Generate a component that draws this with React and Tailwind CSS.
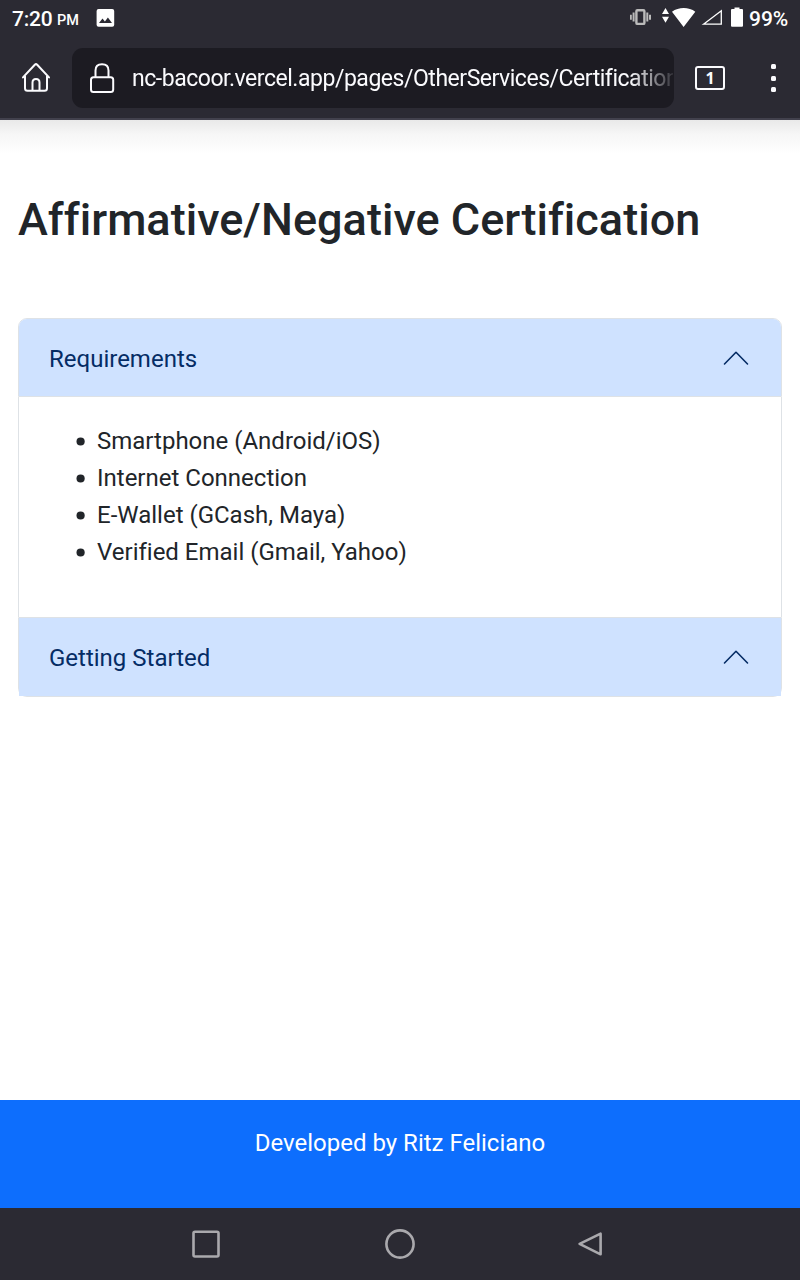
import React from "react";

function StatusBar() {
  return (
    <div className="flex h-9 items-center pl-3 text-white">
      <span className="w-[45px] whitespace-nowrap pt-[2px] text-[21px] font-medium leading-9 tracking-[-0.2px]">7:20</span>
      <span className="w-[38px] whitespace-nowrap pt-[5px] text-[14.5px] font-medium tracking-[-0.1px]">PM</span>
      <svg className="h-[18px] w-[20px]" viewBox="0 0 20 18">
        <rect x="1.6" width="17.6" height="17.8" rx="2" fill="#fff" />
        <path d="M4 14l3.5-4.6 2.4 3 3-4L17 14z" fill="#2b2a33" />
      </svg>
      <svg className="ml-auto h-9 w-[118px] shrink-0" viewBox="630 0 118 36" fill="#fff">
        <g fill="none" stroke="#bbb" strokeWidth="2">
          <rect x="636.4" y="10.3" width="8" height="13.6" rx="1" strokeWidth="2.4" />
          <path d="M633.6 12.5v9M647.3 12.5v9M630.8 14.7v5M650 14.7v5" />
        </g>
        <path d="M665.5 8l3.5 6h-7zM662 16.8h7l-3.5 6zM672 11.8c6.5-5 17-5 23.3 0L683.6 27z" />
        <path d="M703.5 24.2L721.3 10.8v13.4z" fill="none" stroke="#fff" strokeWidth="1.3" />
        <path d="M731 10q0-1 1-1h2.5V7.5h5V9h2.5q1 0 1 1v15.7q0 1-1 1h-10q-1 0-1-1z" />
      </svg>
      <span className="ml-[1px] w-[51px] whitespace-nowrap pt-[2px] text-[21px] font-medium leading-9">99%</span>
    </div>
  );
}

function BrowserBar() {
  return (
    <div className="flex h-[84px] items-start border-b-2 border-[#42414d] pt-3">
      <svg className="h-[60px] w-[72px] shrink-0" viewBox="0 48 72 60" fill="none" stroke="#fbfbfe" strokeWidth="2" strokeLinecap="round" strokeLinejoin="round">
        <path d="M23 77.4L34.8 64.7q1.2-1.1 2.4 0L49 77.4M25 76v12.3q0 2.5 2.5 2.5h17q2.5 0 2.5-2.5V76M32.5 90.5v-8q0-3.5 3.5-3.5t3.5 3.5v8" />
      </svg>
      <div className="flex h-[60px] w-[602px] shrink-0 items-center overflow-hidden rounded-[11px] bg-[#1c1b22]">
        <svg className="h-[60px] w-[60px] shrink-0" viewBox="72 48 60 60" fill="none" stroke="#fbfbfe" strokeWidth="2">
          <rect x="91" y="77.3" width="22.2" height="14.7" rx="2.5" />
          <path d="M95.5 77V70.5q0-6.2 6.5-6.2t6.5 6.2V77" />
        </svg>
        <div className="w-[541px] overflow-hidden whitespace-nowrap pt-[2px] text-[23px] tracking-[-0.47px] text-[#fbfbfe] [mask-image:linear-gradient(to_right,#000_92%,transparent_101%)]">
          nc-bacoor.vercel.app/pages/OtherServices/Certification
        </div>
      </div>
      <div className="ml-[21px] mt-[18px] flex h-6 w-[30px] items-center justify-center rounded-[3px] border-2 border-[#fbfbfe] pb-px font-['Noto_Sans',sans-serif] text-[16px] font-bold leading-none text-[#fbfbfe]">
        1
      </div>
      <div className="ml-[46px] mt-4 flex h-7 flex-col justify-between">
        <span className="h-[5px] w-[5px] rounded-[1.5px] bg-[#fbfbfe]" />
        <span className="h-[5px] w-[5px] rounded-[1.5px] bg-[#fbfbfe]" />
        <span className="h-[5px] w-[5px] rounded-[1.5px] bg-[#fbfbfe]" />
      </div>
    </div>
  );
}

function AccordionHeader({ title }) {
  return (
    <button className="flex w-full grow items-center justify-between bg-[#cfe2ff] pl-[30px] pr-8 text-left text-[24px] text-[#052c65]">
      <span className="pt-[2px]">{title}</span>
      <svg className="h-4 w-[26px]" viewBox="0 0 26 16" fill="none" stroke="#052c65" strokeWidth="1.6" strokeLinecap="round" strokeLinejoin="round">
        <path d="M1.5 14L13 2.3 24.5 14" />
      </svg>
    </button>
  );
}

const requirements = [
  "Smartphone (Android/iOS)",
  "Internet Connection",
  "E-Wallet (GCash, Maya)",
  "Verified Email (Gmail, Yahoo)",
];

export default function App() {
  return (
    <div className="flex h-[1280px] w-[800px] flex-col overflow-hidden bg-white font-['Roboto',sans-serif] text-[#212529] [font-variant-ligatures:none]">
      <header className="h-[120px] shrink-0 bg-[#2b2a33]">
        <StatusBar />
        <BrowserBar />
      </header>
      <main className="grow bg-[linear-gradient(to_bottom,#e9e9e9_0,#f6f6f6_14px,#fff_34px)] px-[18px] pt-[73px]">
        <h1 className="h-[54px] whitespace-nowrap text-[45px] font-medium leading-[54px] tracking-[0.03px]">Affirmative/Negative Certification</h1>
        <section className="mt-[71px] h-[379px]">
          <div className="flex h-[79px] flex-col overflow-hidden rounded-t-[9px] border border-[#dee2e6]">
            <AccordionHeader title="Requirements" />
          </div>
          <div className="h-[220px] border-x border-[#dee2e6] pt-[26px]">
            <ul>
              {requirements.map((item) => (
                <li key={item} className="flex h-[37px] items-center text-[24px] leading-[37px]">
                  <svg className="ml-[57px] mr-3 h-[9px] w-[9px]" viewBox="0 0 9 9">
                    <circle cx="4.6" cy="4.5" r="4.1" fill="#212529" />
                  </svg>
                  {item}
                </li>
              ))}
            </ul>
          </div>
          <div className="flex h-[80px] flex-col rounded-b-[9px] border border-[#dee2e6]">
            <AccordionHeader title="Getting Started" />
          </div>
        </section>
      </main>
      <footer className="h-[108px] shrink-0 bg-[#0d6efd] pt-[25px] text-center text-[24px] leading-[37px] text-white">
        Developed by Ritz Feliciano
      </footer>
      <nav className="h-[72px] shrink-0 bg-[#2b2a33]">
        <svg className="h-[72px] w-[800px]" viewBox="0 0 800 72" fill="none" stroke="#aaa9ad" strokeWidth="2.6">
          <rect x="193.5" y="23.7" width="25" height="24.8" rx="1.5" />
          <circle cx="400" cy="36" r="13.6" />
          <path d="M579.6 35.9L600.6 25.7V46.3z" strokeLinejoin="round" />
        </svg>
      </nav>
    </div>
  );
}
